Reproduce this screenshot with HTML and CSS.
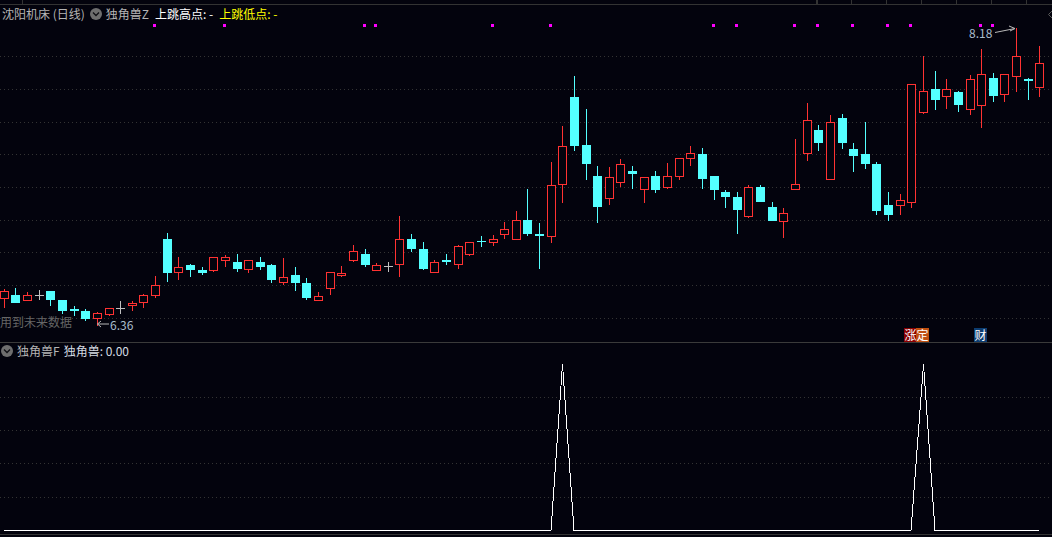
FILE: index.html
```html
<!DOCTYPE html>
<html lang="zh-CN">
<head>
<meta charset="utf-8">
<title>沈阳机床 (日线)</title>
<link rel="stylesheet" href="styles.css">
</head>
<body>
<main class="terminal">
  <div class="ruler">
    <svg class="ruler-svg" width="1052" height="5" viewBox="0 0 1052 5">
      <path class="tick" d="M22.5 0V4M816.5 0V4M817.5 0V4M851.5 0V4M886.5 0V4M921.5 0V4M956.5 0V4M991.5 0V4M1026.5 0V4"/>
    </svg>
  </div>
  <section class="panel panel-main">
    <svg id="main-chart" class="canvas" viewBox="0 5 1052 337" width="1052" height="337">
      <path class="grid" d="M0 56.5H1052M0 89.5H1052M0 122.5H1052M0 154.5H1052M0 187.5H1052M0 220.5H1052M0 252.5H1052M0 285.5H1052M0 318.5H1052"/>
      <g id="candles"></g>
      <g id="marks"></g>
      <path class="note-arrow" d="M97.5 324H109M97.5 324L101 321M97.5 324L101 327"/>
      <path class="note-arrow" d="M995 32.5L1015 28.5M1009 26L1015 28.5L1010 31"/>
      <path class="edge-chevron" d="M1052 11L1048.500 14.500L1052 18"/>
    </svg>
    <div class="legend">
      <span class="legend-name">沈阳机床 (日线)</span>
      <svg class="toggle toggle-first" width="12" height="12" viewBox="0 0 12 12"><circle cx="6" cy="6" r="6" class="toggle-bg"/><path class="toggle-mark" d="M3 4.500L6 7.500L9 4.500"/></svg>
      <span class="legend-name legend-ind">独角兽Z</span>
      <span class="legend-white">上跳高点: -</span>
      <span class="legend-yellow">上跳低点: -</span>
    </div>
    <span class="future-note">用到未来数据</span>
    <span class="price price-low">6.36</span>
    <span class="price price-high">8.18</span>
    <span class="tag tag-red">涨</span>
    <span class="tag tag-orange">定</span>
    <span class="tag tag-blue">财</span>
  </section>
  <section class="panel panel-sub">
    <svg class="canvas" viewBox="0 343 1052 191" width="1052" height="191">
      <path class="grid" d="M0 397.5H1052M0 430.5H1052M0 463.5H1052M0 497.5H1052"/>
      <path class="osc" d="M4 530.500H551L562.500 364L574 530.500H911L923.500 364L935 530.500H1039"/>
    </svg>
    <div class="legend legend-sub">
      <svg class="toggle" width="12" height="12" viewBox="0 0 12 12"><circle cx="6" cy="6" r="6" class="toggle-bg"/><path class="toggle-mark" d="M3 4.500L6 7.500L9 4.500"/></svg>
      <span class="legend-name legend-ind">独角兽F</span>
      <span class="legend-value">独角兽: 0.00</span>
    </div>
  </section>
  <div class="footer"></div>
</main>
<script src="chart.js"></script>
</body>
</html>
```
FILE: styles.css
```css
* { box-sizing: border-box; }
html, body { margin: 0; padding: 0; background: #03030d; overflow: hidden; }
.terminal {
  width: 1052px;
  height: 537px;
  display: flex;
  flex-direction: column;
  background: #03030d;
  font: 12px/14px "Noto Sans CJK SC", "Liberation Sans", sans-serif;
  color: #b4b4b4;
}
.ruler { height: 5px; border-bottom: 1px solid #333; }
.ruler-svg { display: block; }
.tick { stroke: #333; stroke-width: 1; fill: none; }
.panel { position: relative; }
.panel-main { height: 337px; }
.panel-sub { height: 192px; border-top: 1px solid #3a3a3a; }
.footer { height: 3px; border-top: 1px solid #333; }
.canvas { position: absolute; left: 0; top: 0; display: block; }
.grid { stroke: #333; stroke-width: 1; stroke-dasharray: 1 3; fill: none; shape-rendering: crispEdges; }
.osc { stroke: #fff; stroke-width: 1; fill: none; shape-rendering: crispEdges; }
.note-arrow { stroke: #b8b8b8; stroke-width: 1; fill: none; }
.edge-chevron { stroke: #5a5a5a; stroke-width: 1; fill: none; }
.legend { position: relative; display: flex; align-items: center; height: 14px; margin-top: 2px; padding-left: 2px; white-space: nowrap; }
.legend-sub { margin-top: 0; padding-left: 1px; top: 1px; }
.toggle { flex: none; display: block; }
.toggle-first { margin-left: 5px; }
.toggle-bg { fill: #6e6e6e; }
.toggle-mark { stroke: #101014; stroke-width: 1.300; fill: none; }
.legend-ind { margin-left: 4px; }
.legend-white { color: #fff; margin-left: 6px; }
.legend-yellow { color: #ff0; margin-left: 6px; }
.legend-value { color: #d4dbe2; margin-left: 4px; }
.future-note { position: absolute; left: 0; top: 310px; color: #666; }
.price { position: absolute; color: #a9bccc; }
.price-low { left: 110px; top: 313px; }
.price-high { left: 969px; top: 21px; }
.tag { position: absolute; top: 323px; width: 13px; height: 14px; line-height: 14px; text-align: center; color: #fff; }
.tag-red { left: 904px; background: #8a0000; }
.tag-orange { left: 916px; background: #c04f10; }
.tag-blue { left: 974px; background: #0c3c70; }
```
FILE: chart.js
```js
var CANDLES = [
[4,289,291,299,308,'r'],[15,288,295,303,303,'c'],[27,292,295,301,301,'r'],[39,290,295,295,300,'g'],
[50,291,291,300,306,'c'],[62,300,300,311,314,'c'],[74,306,309,311,316,'c'],[85,309,311,319,321,'c'],
[97,312,313,319,326,'r'],[109,308,308,315,316,'r'],[120,301,308,308,314,'g'],[132,301,303,306,311,'r'],
[143,294,295,303,308,'r'],[155,276,285,296,298,'r'],[167,233,239,273,282,'c'],[178,257,267,273,280,'r'],
[190,264,265,270,277,'c'],[202,267,270,273,275,'c'],[213,257,257,271,272,'r'],[225,255,257,261,267,'r'],
[237,254,262,269,272,'c'],[248,260,260,270,273,'r'],[260,257,262,267,270,'c'],[271,264,265,280,283,'c'],
[283,258,277,283,285,'r'],[295,267,275,283,291,'c'],[306,278,283,298,300,'c'],[318,292,296,301,301,'r'],
[330,272,272,289,295,'r'],[341,266,273,276,277,'r'],[353,245,251,261,262,'r'],[365,249,254,265,267,'c'],
[376,263,265,271,271,'r'],[388,262,266,266,272,'g'],[399,216,239,265,277,'r'],[411,234,239,249,252,'c'],
[423,242,249,269,270,'c'],[434,260,262,273,273,'r'],[446,254,260,262,265,'c'],[458,245,246,265,269,'r'],
[469,242,242,255,256,'r'],[481,236,241,242,247,'c'],[493,235,239,243,246,'r'],[504,222,229,235,239,'r'],
[516,211,220,240,240,'r'],[527,189,220,234,236,'c'],[539,223,234,236,269,'c'],[551,162,185,237,243,'r'],
[562,126,146,185,203,'r'],[574,76,97,146,151,'c'],[586,109,145,164,180,'c'],[597,166,176,207,223,'c'],
[609,167,177,199,205,'r'],[620,159,164,183,187,'r'],[632,166,171,174,189,'c'],[644,177,177,190,203,'r'],
[655,171,176,190,193,'c'],[667,163,176,188,189,'r'],[679,158,158,177,180,'r'],[690,146,153,159,166,'r'],
[702,148,154,179,189,'c'],[714,176,176,190,200,'c'],[725,190,192,197,208,'c'],[737,192,197,210,234,'c'],
[748,185,187,217,218,'r'],[760,185,187,202,202,'c'],[772,202,207,221,221,'c'],[783,208,213,222,238,'r'],
[795,139,184,190,190,'r'],[807,103,120,154,161,'r'],[818,125,130,143,151,'c'],[830,115,122,180,180,'r'],
[842,114,118,143,149,'c'],[853,143,149,156,172,'c'],[865,122,154,164,169,'c'],[876,162,164,211,215,'c'],
[888,192,205,215,221,'c'],[900,194,200,206,215,'r'],[911,84,84,203,208,'r'],[923,56,91,113,114,'r'],
[935,71,89,100,110,'c'],[946,79,89,97,109,'r'],[958,91,92,105,112,'c'],[970,75,79,110,115,'r'],
[981,49,74,106,128,'r'],[993,73,78,96,102,'c'],[1004,74,74,95,102,'r'],[1016,28,56,77,92,'r'],
[1028,78,79,81,100,'c'],[1039,46,63,88,97,'r']
];
var MARKS = [153,223,363,374,491,549,712,735,793,816,851,886,909,979,991];
var COLORS = { r: '#ff3232', c: '#54ffff', g: '#c0c0c0' };
var NS = 'http://www.w3.org/2000/svg';

function el(parent, name, attrs) {
  var node = document.createElementNS(NS, name);
  for (var key in attrs) node.setAttribute(key, attrs[key]);
  node.setAttribute('shape-rendering', 'crispEdges');
  parent.appendChild(node);
}

var candleGroup = document.getElementById('candles');
CANDLES.forEach(function (c) {
  var x = c[0], hi = c[1], top = c[2], bot = c[3], lo = c[4], color = COLORS[c[5]];
  el(candleGroup, 'rect', { x: x, y: hi, width: 1, height: lo - hi, fill: color });
  if (c[5] === 'r') {
    el(candleGroup, 'rect', { x: x - 4, y: top, width: 9, height: bot - top, fill: '#03030d' });
    el(candleGroup, 'rect', { x: x - 3.5, y: top + 0.5, width: 8, height: bot - top - 1, fill: 'none', stroke: color, 'stroke-width': 1 });
  } else if (c[5] === 'g') {
    el(candleGroup, 'rect', { x: x - 4, y: top, width: 9, height: 1, fill: color });
  } else {
    el(candleGroup, 'rect', { x: x - 4, y: top, width: 9, height: bot - top, fill: color });
  }
});

var markGroup = document.getElementById('marks');
MARKS.forEach(function (x) {
  el(markGroup, 'rect', { x: x, y: 24, width: 3, height: 3, fill: '#ff00ff' });
});
```
